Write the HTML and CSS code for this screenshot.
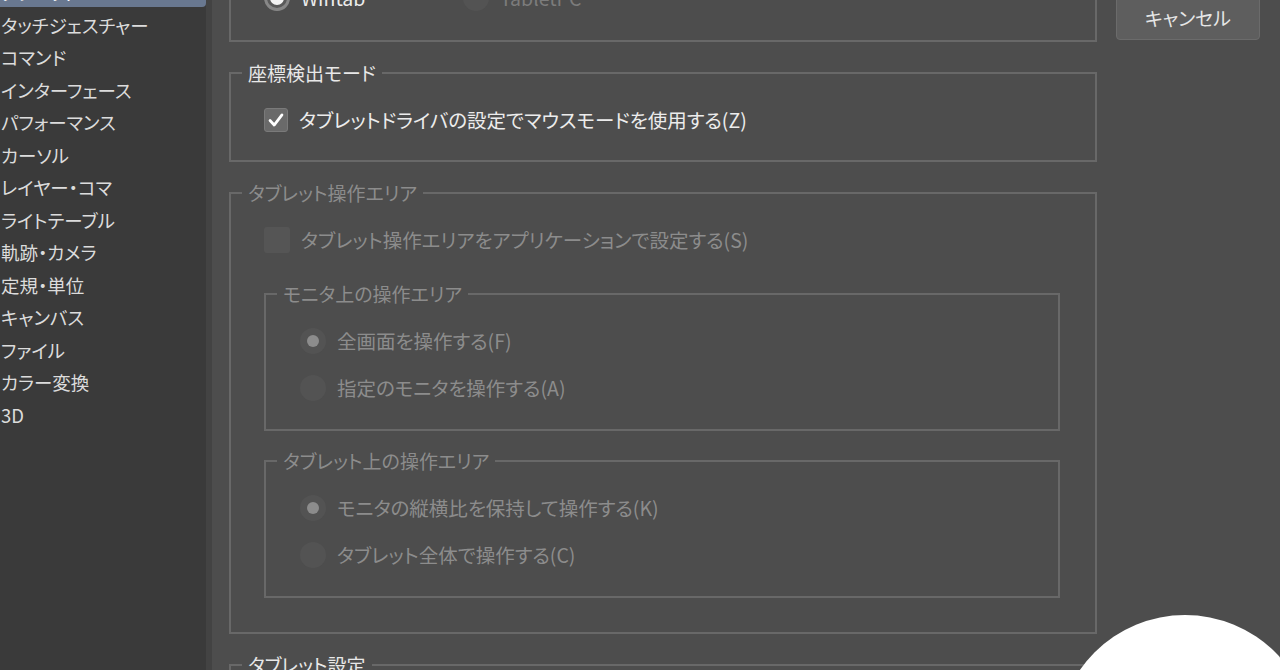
FILE: index.html
```html
<!DOCTYPE html>
<html lang="ja">
<head>
<meta charset="utf-8">
<title>環境設定 - タブレット</title>
<link rel="stylesheet" href="styles.css">
</head>
<body>
<div class="window">
  <aside class="sidebar">
    <ul class="cats">
      <li class="cat selected">タブレット</li>
      <li class="cat">タッチジェスチャー</li>
      <li class="cat">コマンド</li>
      <li class="cat">インターフェース</li>
      <li class="cat">パフォーマンス</li>
      <li class="cat">カーソル</li>
      <li class="cat">レイヤー・コマ</li>
      <li class="cat">ライトテーブル</li>
      <li class="cat">軌跡・カメラ</li>
      <li class="cat">定規・単位</li>
      <li class="cat">キャンバス</li>
      <li class="cat">ファイル</li>
      <li class="cat">カラー変換</li>
      <li class="cat">3D</li>
    </ul>
  </aside>
  <div class="divider"></div>
  <main class="pane">
    <div class="groups">
      <fieldset class="group">
        <legend class="legend">使用するタブレットサービス</legend>
        <div class="body body-service">
          <div class="opt opt-wide">
            <span class="radio on"></span><span class="label">Wintab</span>
          </div>
          <div class="opt off">
            <span class="radio dim"></span><span class="label">TabletPC</span>
          </div>
        </div>
      </fieldset>

      <fieldset class="group">
        <legend class="legend">座標検出モード</legend>
        <div class="body body-mode">
          <div class="opt">
            <span class="check on">
              <svg viewBox="0 0 24 24" width="24" height="24"><polyline points="5.5,12.5 10,17.5 18.5,6.5" fill="none" stroke="#ffffff" stroke-width="3" stroke-linecap="round" stroke-linejoin="round"/></svg>
            </span>
            <span class="label">タブレットドライバの設定でマウスモードを使用する(Z)</span>
          </div>
        </div>
      </fieldset>

      <fieldset class="group off">
        <legend class="legend">タブレット操作エリア</legend>
        <div class="body body-area">
          <div class="opt">
            <span class="check dim"></span>
            <span class="label">タブレット操作エリアをアプリケーションで設定する(S)</span>
          </div>

          <fieldset class="group sub sub-first">
            <legend class="legend">モニタ上の操作エリア</legend>
            <div class="body body-sub">
              <div class="opt"><span class="radio dim dot"></span><span class="label">全画面を操作する(F)</span></div>
              <div class="opt"><span class="radio dim"></span><span class="label">指定のモニタを操作する(A)</span></div>
            </div>
          </fieldset>

          <fieldset class="group sub sub-next">
            <legend class="legend">タブレット上の操作エリア</legend>
            <div class="body body-sub">
              <div class="opt"><span class="radio dim dot"></span><span class="label">モニタの縦横比を保持して操作する(K)</span></div>
              <div class="opt"><span class="radio dim"></span><span class="label">タブレット全体で操作する(C)</span></div>
            </div>
          </fieldset>
        </div>
      </fieldset>

      <fieldset class="group">
        <legend class="legend">タブレット設定</legend>
        <div class="body body-mode">
          <div class="opt"><span class="label">&nbsp;</span></div>
        </div>
      </fieldset>
    </div>

    <div class="actions">
      <button class="btn" type="button">キャンセル</button>
    </div>
  </main>
  <div class="bubble"></div>
</div>
</body>
</html>
```

FILE: styles.css
```css
* { box-sizing: border-box; }

html, body {
  margin: 0;
  padding: 0;
  background: #4d4d4d;
}

body {
  font-family: "Noto Sans CJK JP", "Noto Sans", sans-serif;
  font-feature-settings: "palt";
  font-size: 18px;
  font-weight: 400;
  color: #e2e2e2;
}

.window {
  position: relative;
  display: flex;
  width: 1280px;
  height: 670px;
  overflow: hidden;
  background: #4d4d4d;
}

/* ---------- sidebar ---------- */
.sidebar {
  width: 206px;
  flex: none;
  background: #3a3a3a;
}

.cats {
  list-style: none;
  margin: -24px 0 0 0;
  padding: 0;
}

.cat {
  height: 32.5px;
  line-height: 32.5px;
  padding-left: 1px;
  font-size: 18.5px;
  color: #dcdcdc;
  white-space: nowrap;
}

.cat.selected {
  background: #697890;
  color: #ffffff;
  border-radius: 0 0 4px 0;
  height: 31px;
  margin-bottom: 1.5px;
}

.divider {
  width: 6px;
  flex: none;
  background: #434343;
}

/* ---------- main pane ---------- */
.pane {
  flex: 1;
  display: flex;
  align-items: flex-start;
  padding-left: 17px;
  background: #4d4d4d;
}

.groups {
  width: 868px;
  flex: none;
  margin-top: -62px;
  display: flex;
  flex-direction: column;
  gap: 19px;
}

.group {
  margin: 0;
  padding: 0;
  min-width: 0;
  border: 2px solid #686868;
}

.legend {
  margin-left: 11px;
  padding: 0 6px;
  height: 24px;
  line-height: 24px;
  font-size: 19px;
  color: #e8e8e8;
  white-space: nowrap;
}

.group.off .legend,
.group.off .label {
  color: #8c8c8c;
}

.body-service {
  display: flex;
  padding: 23px 0 29px 33px;
}

.body-mode {
  padding: 22px 0 27px 33px;
}

.body-area {
  padding: 22px 35px 34px 33px;
}

.sub-first { margin-top: 29px; }
.sub-next { margin-top: 18px; }

.body-sub {
  display: flex;
  flex-direction: column;
  gap: 21px;
  padding: 22px 0 28px 34px;
}

.opt {
  display: flex;
  align-items: center;
  height: 26px;
  gap: 11px;
}

.opt-wide { width: 199px; }

.opt.off .label { color: #7c7c7c; }

.label {
  color: #ececec;
  font-size: 19.5px;
  white-space: nowrap;
  line-height: 26px;
}

/* radio buttons */
.radio {
  position: relative;
  width: 26px;
  height: 26px;
  flex: none;
  border-radius: 50%;
  display: flex;
  align-items: center;
  justify-content: center;
}

.radio.on {
  background: #5a5a5a;
  border: 3px solid #878787;
}

.radio.on::after {
  content: "";
  width: 14px;
  height: 14px;
  border-radius: 50%;
  background: #f4f4f4;
}

.radio.dim {
  background: #535353;
  filter: blur(0.6px);
}

.radio.dot::after {
  content: "";
  width: 12px;
  height: 12px;
  border-radius: 50%;
  background: #8c8c8c;
}

/* checkboxes */
.check {
  width: 24px;
  height: 24px;
  flex: none;
  border-radius: 3px;
  display: flex;
  align-items: center;
  justify-content: center;
}

.check.on {
  background: #6a6a6a;
  border: 1px solid #7a7a7a;
}

.check.dim {
  width: 26px;
  height: 26px;
  background: #555555;
  filter: blur(0.6px);
}

/* ---------- right column ---------- */
.actions {
  margin-left: 19px;
  flex: none;
}

.btn {
  display: block;
  width: 144px;
  height: 46px;
  margin-top: -6px;
  padding: 0;
  border: 1px solid #6b6b6b;
  border-radius: 4px;
  background: #5e5e5e;
  color: #e6e6e6;
  font-family: "Noto Sans CJK JP", "Noto Sans", sans-serif;
  font-feature-settings: "palt";
  font-size: 19px;
  font-weight: 400;
}

/* white circle overlay */
.bubble {
  position: absolute;
  left: 1057px;
  top: 615px;
  width: 256px;
  height: 256px;
  border-radius: 50%;
  background: #ffffff;
}
```
